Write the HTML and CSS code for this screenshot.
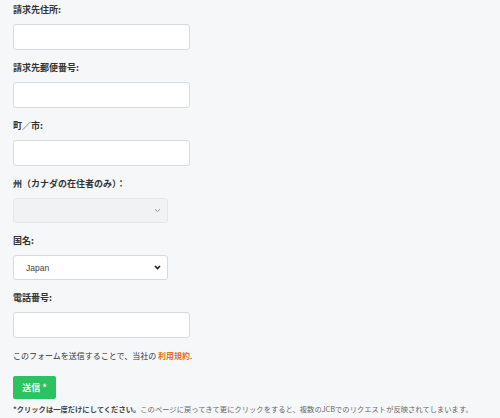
FILE: index.html
```html
<!DOCTYPE html>
<html lang="ja">
<head>
<meta charset="utf-8">
<link rel="stylesheet" href="styles.css">
</head>
<body>
<form class="form">
  <div class="field">
    <label class="label">請求先住所:</label>
    <input class="input" type="text">
  </div>
  <div class="field">
    <label class="label">請求先郵便番号:</label>
    <input class="input" type="text">
  </div>
  <div class="field">
    <label class="label">町／市:</label>
    <input class="input" type="text">
  </div>
  <div class="field">
    <label class="label">州（カナダの在住者のみ）：</label>
    <div class="select-wrap">
      <select class="select select-disabled" disabled><option></option></select>
      <svg class="chev" width="7" height="5" viewBox="0 0 7 5"><path d="M1 1.2 L3.5 3.6 L6 1.2" fill="none" stroke="#9a9a9a" stroke-width="1"/></svg>
    </div>
  </div>
  <div class="field">
    <label class="label">国名:</label>
    <div class="select-wrap">
      <select class="select"><option>Japan</option></select>
      <svg class="chev" width="7" height="5" viewBox="0 0 7 5"><path d="M1 1 L3.5 3.5 L6 1" fill="none" stroke="#222" stroke-width="1.6"/></svg>
    </div>
  </div>
  <div class="field">
    <label class="label">電話番号:</label>
    <input class="input" type="text">
  </div>
  <p class="terms">このフォームを送信することで、当社の <a class="link">利用規約</a>.</p>
  <button class="btn" type="button">送信 *</button>
  <p class="note"><span class="note-strong">*クリックは一度だけにしてください。</span>このページに戻ってきて更にクリックをすると、複数のJCBでのリクエストが反映されてしまいます。</p>
</form>
</body>
</html>
```

FILE: styles.css
```css
html, body {
  margin: 0;
  padding: 0;
  background: #f6f7f9;
}
body {
  font-family: "Noto Sans CJK JP", "Noto Sans", sans-serif;
  color: #333;
  width: 500px;
  height: 418px;
  overflow: hidden;
}
.form {
  padding: 4px 0 0 13px;
  display: flex;
  flex-direction: column;
  align-items: flex-start;
}
.field {
  display: flex;
  flex-direction: column;
  align-items: flex-start;
  margin-bottom: 12px;
}
.label {
  font-size: 9px;
  line-height: 12px;
  font-weight: 700;
  color: #333;
  margin-bottom: 8px;
}
.input {
  display: block;
  box-sizing: border-box;
  width: 177px;
  height: 26px;
  margin: 0;
  background: #fff;
  border: 1px solid #d9dadc;
  border-radius: 3px;
  padding: 0 8px;
  outline: none;
}
.select-wrap {
  position: relative;
  width: 155px;
  height: 25px;
}
.select {
  display: block;
  -webkit-appearance: none;
  appearance: none;
  box-sizing: border-box;
  width: 155px;
  height: 25px;
  margin: 0;
  background: #fff;
  border: 1px solid #d9dadc;
  border-radius: 3px;
  padding: 0 0 0 12px;
  font-family: "Liberation Sans", Arial, sans-serif;
  font-size: 8.5px;
  color: #444;
  outline: none;
}
.select-disabled {
  background: #f0f1f3;
  border-color: #e0e1e3;
}
.chev {
  position: absolute;
  right: 7px;
  top: 10px;
}
.terms {
  margin: 0 0 14px 0;
  font-size: 8px;
  line-height: 12px;
  color: #333;
}
.link {
  color: #e8701c;
  font-weight: 700;
}
.btn {
  box-sizing: border-box;
  height: 23px;
  width: 43px;
  margin: 0 0 5px 0;
  padding: 0;
  border: none;
  border-radius: 2px;
  background: #2cc262;
  color: #fff;
  font-family: "Noto Sans CJK JP", sans-serif;
  font-size: 9px;
  font-weight: 700;
}
.note {
  margin: 0;
  font-size: 7.3px;
  line-height: 10px;
  color: #666;
  white-space: nowrap;
}
.note-strong {
  color: #444;
  font-weight: 700;
}
```
